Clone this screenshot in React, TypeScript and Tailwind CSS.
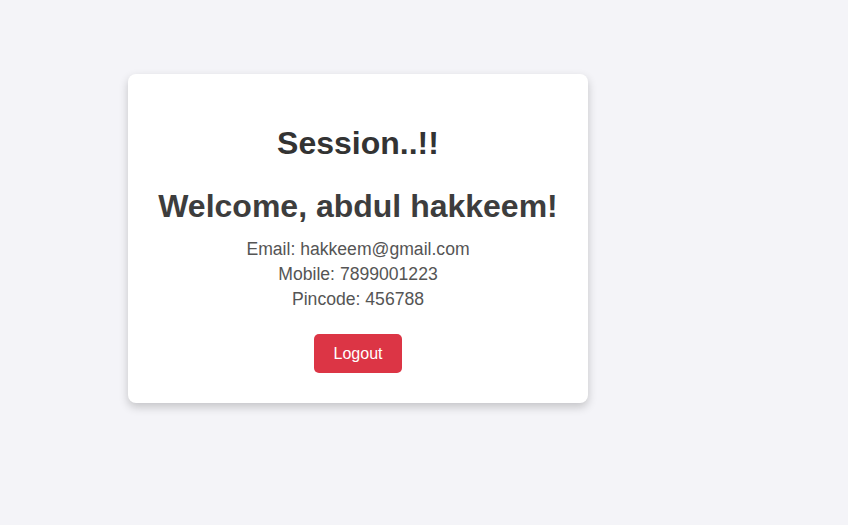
export default function App() {
  const user = {
    name: "abdul hakkeem",
    email: "hakkeem@gmail.com",
    mobile: "7899001223",
    pincode: "456788",
  }

  return (
    <div className="min-h-screen bg-[#f4f4f8] pt-[74px] pl-[128px] font-['Liberation_Sans',Arial,sans-serif]">
      <div className="w-[460px] rounded-lg bg-white p-[30px] text-center shadow-[0_4px_10px_rgba(0,0,0,0.2)]">
        <h1 className="mt-[21px] mb-[26px] text-[32px] leading-[37px] font-bold text-[#333]">Session..!!</h1>
        <h2 className="mb-[12px] text-[32px] leading-[37px] font-bold text-[#3d3d3d]">Welcome, {user.name}!</h2>
        <p className="text-[17.6px] leading-[25px] text-[#555]">Email: {user.email}</p>
        <p className="text-[17.6px] leading-[25px] text-[#555]">Mobile: {user.mobile}</p>
        <p className="text-[17.6px] leading-[25px] text-[#555]">Pincode: {user.pincode}</p>
        <button className="mt-[22px] rounded-[5px] bg-[#dc3545] px-[20px] py-[10px] text-[16px] leading-[19px] text-white">
          Logout
        </button>
      </div>
    </div>
  )
}
